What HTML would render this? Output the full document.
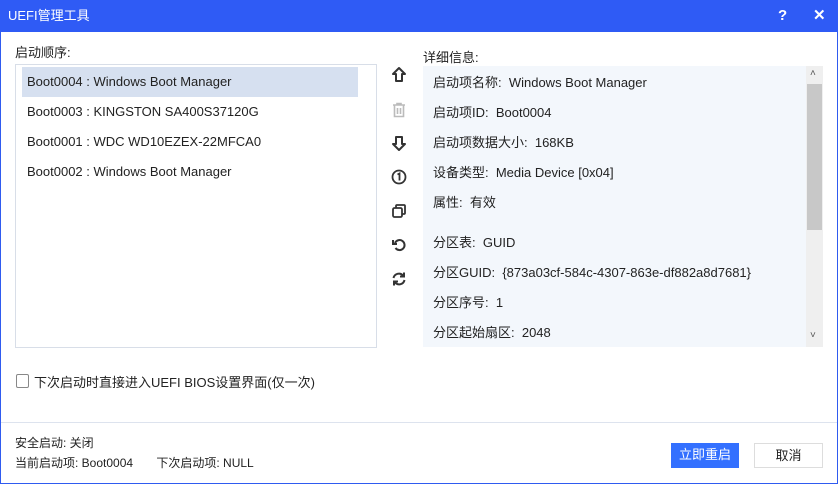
<!DOCTYPE html><html><head><meta charset="utf-8"><style>
*{margin:0;padding:0;box-sizing:border-box}
body{width:838px;height:484px;overflow:hidden;background:#fff;font-family:"Liberation Sans","Noto Sans CJK SC",sans-serif;font-size:13px;color:#222;position:relative}
.win{position:absolute;left:0;top:0;width:838px;height:484px;border:1px solid #2f5bf0}
.title{position:absolute;left:0;top:0;width:838px;height:32px;background:#2f5bf5;color:#fff;font-size:13px;line-height:32px;padding-left:8px}
.tb{position:absolute;top:0;color:#fff;font-size:15px;font-weight:bold;line-height:32px}
.abs{position:absolute;white-space:nowrap}
.list{position:absolute;left:15px;top:64px;width:362px;height:284px;border:1px solid #d8dee8}
.row{position:absolute;left:6px;width:336px;height:30px;line-height:30px;padding-left:5px}
.sel{background:#d6e0f0}
.detail{position:absolute;left:423px;top:66px;width:400px;height:281px;background:#f3f7fc}
.d{position:absolute;left:10px}
.sb{position:absolute;left:383px;top:0;width:17px;height:281px;background:#efefef}
.thumb{position:absolute;left:1px;top:18px;width:15px;height:146px;background:#c8c8c8}
.ic{position:absolute;left:390px}
.btn{position:absolute;top:443px;height:25px;line-height:24px;text-align:center;font-size:13px}
</style></head><body>
<div class="win"></div>
<div class="title">UEFI管理工具</div>
<div class="tb" style="left:778px">?</div>
<div class="tb" style="left:813px">✕</div>
<div class="abs" style="left:15px;top:42px">启动顺序:</div>
<div class="list">
<div class="row sel" style="top:2px">Boot0004 : Windows Boot Manager</div>
<div class="row" style="top:32px">Boot0003 : KINGSTON SA400S37120G</div>
<div class="row" style="top:62px">Boot0001 : WDC WD10EZEX-22MFCA0</div>
<div class="row" style="top:92px">Boot0002 : Windows Boot Manager</div>
</div>
<svg class="ic" style="top:66px" width="18" height="18" viewBox="0 0 18 18"><path d="M9 2 L3 8 H6 V15 H12 V8 H15 Z" fill="none" stroke="#333" stroke-width="2" stroke-linejoin="round"/></svg>
<svg class="ic" style="top:101px" width="18" height="18" viewBox="0 0 18 18"><path d="M3 4 H15 M7 4 V2.5 H11 V4 M4.5 4 V15.5 H13.5 V4 M7.5 7 V13 M10.5 7 V13" fill="none" stroke="#bbb" stroke-width="1.6"/></svg>
<svg class="ic" style="top:134px" width="18" height="18" viewBox="0 0 18 18"><path d="M9 16 L3 10 H6 V3 H12 V10 H15 Z" fill="none" stroke="#333" stroke-width="2" stroke-linejoin="round"/></svg>
<svg class="ic" style="top:168px" width="18" height="18" viewBox="0 0 18 18"><circle cx="9" cy="9" r="6.5" fill="none" stroke="#333" stroke-width="1.8"/><path d="M7.5 6.5 L9.5 5.5 V12.5" fill="none" stroke="#333" stroke-width="1.8"/></svg>
<svg class="ic" style="top:202px" width="18" height="18" viewBox="0 0 18 18"><rect x="3" y="6" width="9" height="9" rx="1.5" fill="none" stroke="#333" stroke-width="1.8"/><path d="M6 6 V4 A1 1 0 0 1 7 3 H14 A1 1 0 0 1 15 4 V11 A1 1 0 0 1 14 12 H12" fill="none" stroke="#333" stroke-width="1.8"/></svg>
<svg class="ic" style="top:236px" width="18" height="18" viewBox="0 0 18 18"><path d="M5 7 A5 5 0 1 1 5.5 12" fill="none" stroke="#333" stroke-width="2"/><path d="M3 4 V8 H7" fill="none" stroke="#333" stroke-width="2"/></svg>
<svg class="ic" style="top:270px" width="18" height="18" viewBox="0 0 18 18"><path d="M3.5 8 A5.5 5.5 0 0 1 13 5.5 M14.5 10 A5.5 5.5 0 0 1 5 12.5" fill="none" stroke="#333" stroke-width="2"/><path d="M14 2.5 V6.5 H10 M4 15.5 V11.5 H8" fill="none" stroke="#333" stroke-width="2"/></svg>
<div class="abs" style="left:423px;top:47px">详细信息:</div>
<div class="detail">
<div class="d" style="top:6px">启动项名称:&nbsp; Windows Boot Manager</div>
<div class="d" style="top:36px">启动项ID:&nbsp; Boot0004</div>
<div class="d" style="top:66px">启动项数据大小:&nbsp; 168KB</div>
<div class="d" style="top:96px">设备类型:&nbsp; Media Device [0x04]</div>
<div class="d" style="top:126px">属性:&nbsp; 有效</div>
<div class="d" style="top:166px">分区表:&nbsp; GUID</div>
<div class="d" style="top:196px">分区GUID:&nbsp; {873a03cf-584c-4307-863e-df882a8d7681}</div>
<div class="d" style="top:226px">分区序号:&nbsp; 1</div>
<div class="d" style="top:256px">分区起始扇区:&nbsp; 2048</div>
<div class="sb"><div class="thumb"></div><div class="abs" style="left:4px;top:2px;font-size:10px;color:#555">˄</div><div class="abs" style="left:4px;top:264px;font-size:10px;color:#555">˅</div></div>
</div>
<div class="abs" style="left:16px;top:374px;width:13px;height:14px;border:1px solid #888;border-radius:2px"></div>
<div class="abs" style="left:34px;top:372px">下次启动时直接进入UEFI BIOS设置界面(仅一次)</div>
<div class="abs" style="left:1px;top:422px;width:836px;height:1px;background:#dde3ee"></div>
<div class="abs" style="left:15px;top:434px;font-size:12px">安全启动: 关闭</div>
<div class="abs" style="left:15px;top:454px;font-size:12px">当前启动项: Boot0004 &nbsp; &nbsp; &nbsp; 下次启动项: NULL</div>
<div class="btn" style="left:671px;width:68px;background:#3370ff;color:#fff">立即重启</div>
<div class="btn" style="left:754px;width:69px;border:1px solid #ddd;color:#222">取消</div>
</body></html>
